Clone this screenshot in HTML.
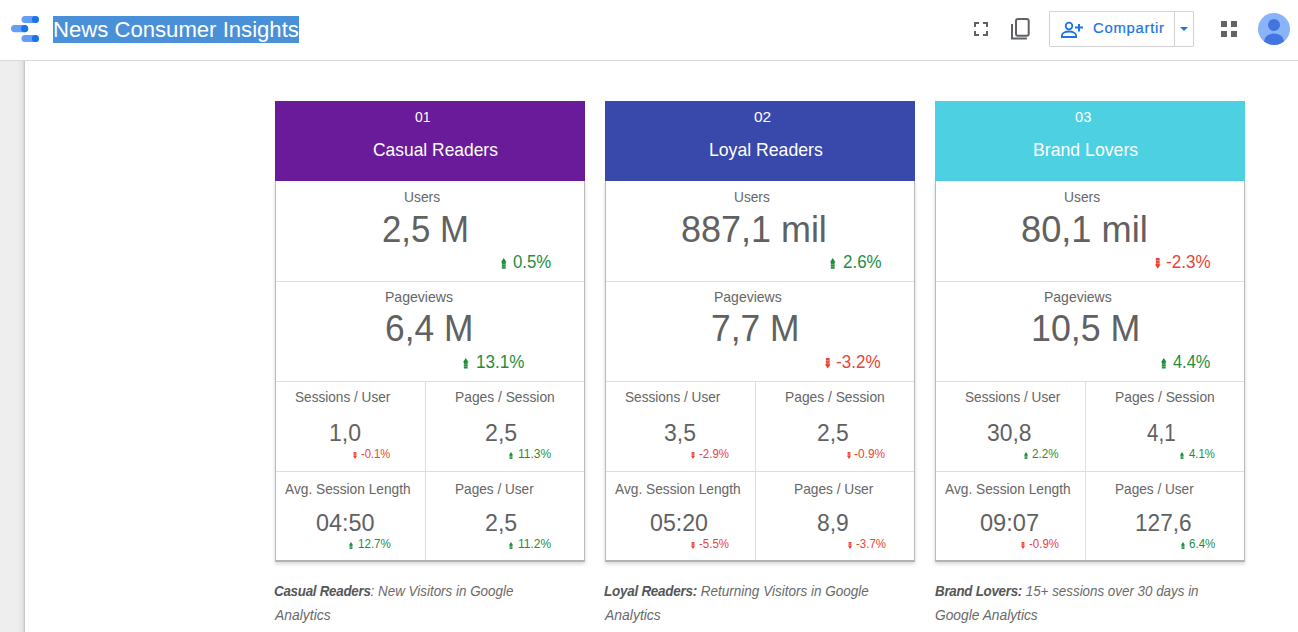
<!DOCTYPE html><html><head><meta charset="utf-8"><style>
*{margin:0;padding:0;box-sizing:border-box}
html,body{width:1298px;height:632px;overflow:hidden;background:#fff;font-family:"Liberation Sans",sans-serif}
.t{position:absolute;white-space:nowrap;transform-origin:0 0}
.ar{position:absolute;overflow:visible}
b{letter-spacing:-0.3px;color:#575757}
#topbar{position:absolute;left:0;top:0;width:1298px;height:60px;background:#fff}
#topline{position:absolute;left:0;top:60px;width:1298px;height:1px;background:#d9d9d9}
#side{position:absolute;left:0;top:61px;width:25px;height:571px;background:linear-gradient(to right,#eeeeee 0,#eeeeee 17px,#e6e6e6 22px,#d9d9d9 23.5px,#c8c8c8 24px,#c8c8c8 25px)}
.hl{position:absolute;left:53px;top:16px;width:246px;height:27px;background:#4a90d9}
.hd{position:absolute;top:101px;width:310px;height:80px}
.bd{position:absolute;top:181px;width:310px;height:381px;background:#fff;border:1px solid #b9b9b9;border-top:none;border-bottom:2px solid #b3b3b3;box-shadow:0 2px 4px rgba(0,0,0,.16)}
.hr{position:absolute;height:1px;background:#dedede}
.vr{position:absolute;width:1px;background:#dedede}
</style></head><body><div id="topbar"></div><div id="topline"></div><div id="side"></div>
<svg style="position:absolute;left:10px;top:15px" width="30" height="28" viewBox="0 0 30 28">
<rect x="11.5" y="1" width="17.4" height="7" rx="3.5" fill="#669df6"/><circle cx="25.4" cy="4.5" r="3.5" fill="#1a73e8"/>
<rect x="1" y="10" width="17.2" height="7.2" rx="3.6" fill="#669df6"/><circle cx="14.6" cy="13.6" r="3.6" fill="#1a73e8"/>
<rect x="11.5" y="20" width="17.4" height="7" rx="3.5" fill="#669df6"/><circle cx="25.4" cy="23.5" r="3.5" fill="#1a73e8"/>
</svg>
<div class="hl"></div>
<svg style="position:absolute;left:974px;top:22px" width="14" height="14" viewBox="0 0 14 14"><path d="M0,0H5V2H2V5H0Z M9,0H14V5H12V2H9Z M0,9H2V12H5V14H0Z M12,9H14V14H9V12H12Z" fill="#5f6368"/></svg>
<svg style="position:absolute;left:1010px;top:17px" width="22" height="24" viewBox="0 0 22 24"><path d="M2,6.9V21.5H16.9" fill="none" stroke="#5f6368" stroke-width="2"/><rect x="6" y="1.9" width="12.7" height="16.8" rx="2" fill="none" stroke="#5f6368" stroke-width="2"/></svg>
<div style="position:absolute;left:1049px;top:11px;width:145px;height:36px;border:1px solid #d2d2d2;border-radius:1px"></div>
<div style="position:absolute;left:1174px;top:12px;width:1px;height:34px;background:#d2d2d2"></div>
<svg style="position:absolute;left:1060px;top:21px" width="24" height="18" viewBox="0 0 24 18"><circle cx="9" cy="5" r="3.3" fill="none" stroke="#1a73e8" stroke-width="1.8"/><path d="M1.9,16V14.5C1.9,12 5.5,10.5 9,10.5S16.1,12 16.1,14.5V16Z" fill="none" stroke="#1a73e8" stroke-width="1.8"/><path d="M15,6.6H23M19,3V10.6" stroke="#1a73e8" stroke-width="2"/></svg>
<svg style="position:absolute;left:1180px;top:27px" width="8" height="4" viewBox="0 0 8 4"><path d="M0,0H8L4,4Z" fill="#1a73e8"/></svg>
<svg style="position:absolute;left:1221px;top:21px" width="16" height="16" viewBox="0 0 16 16"><rect x="0" y="0" width="6" height="6" fill="#5f6368"/><rect x="10" y="0" width="6" height="6" fill="#5f6368"/><rect x="0" y="10" width="6" height="6" fill="#5f6368"/><rect x="10" y="10" width="6" height="6" fill="#5f6368"/></svg>
<svg style="position:absolute;left:1258px;top:13px" width="32" height="32" viewBox="0 0 32 32"><defs><clipPath id="cc"><circle cx="16" cy="16" r="16"/></clipPath></defs><circle cx="16" cy="16" r="16" fill="#8ab4f8"/><g clip-path="url(#cc)"><circle cx="16" cy="12" r="6" fill="#4176e0"/><ellipse cx="16" cy="28.5" rx="10" ry="8" fill="#4176e0"/></g></svg>
<div class="hd" style="left:275px;background:#6a1b9a"></div>
<div class="bd" style="left:275px"></div>
<div class="hr" style="left:276px;top:281px;width:308px"></div>
<div class="hr" style="left:276px;top:381px;width:308px"></div>
<div class="hr" style="left:276px;top:471px;width:308px"></div>
<div class="vr" style="left:425px;top:382px;height:178px"></div>
<div class="hd" style="left:605px;background:#3949ab"></div>
<div class="bd" style="left:605px"></div>
<div class="hr" style="left:606px;top:281px;width:308px"></div>
<div class="hr" style="left:606px;top:381px;width:308px"></div>
<div class="hr" style="left:606px;top:471px;width:308px"></div>
<div class="vr" style="left:755px;top:382px;height:178px"></div>
<div class="hd" style="left:935px;background:#4dd0e1"></div>
<div class="bd" style="left:935px"></div>
<div class="hr" style="left:936px;top:281px;width:308px"></div>
<div class="hr" style="left:936px;top:381px;width:308px"></div>
<div class="hr" style="left:936px;top:471px;width:308px"></div>
<div class="vr" style="left:1085px;top:382px;height:178px"></div>
<div id="title" class="t" style="left:53.16px;top:18.22px;font-size:22.66px;line-height:22.66px;color:#ffffff;font-style:normal;font-weight:normal;transform:scaleX(0.9763);">News Consumer Insights</div>
<div id="share" class="t" style="left:1092.81px;top:21.59px;font-size:13.80px;line-height:13.80px;color:#1a73e8;font-style:normal;font-weight:normal;transform:scaleX(1.0731);-webkit-text-stroke:0.2px #1a73e8;letter-spacing:0.7px;">Compartir</div>
<div id="num0" class="t" style="left:414.94px;top:108.67px;font-size:15.40px;line-height:15.40px;color:#ffffff;font-style:normal;font-weight:normal;transform:scaleX(0.9073);">01</div>
<div id="name0" class="t" style="left:372.67px;top:140.50px;font-size:18.54px;line-height:18.54px;color:#ffffff;font-style:normal;font-weight:normal;transform:scaleX(0.9398);">Casual Readers</div>
<div id="num1" class="t" style="left:754.16px;top:108.65px;font-size:15.40px;line-height:15.40px;color:#ffffff;font-style:normal;font-weight:normal;transform:scaleX(1.0064);">02</div>
<div id="name1" class="t" style="left:708.86px;top:141.43px;font-size:18.54px;line-height:18.54px;color:#ffffff;font-style:normal;font-weight:normal;transform:scaleX(0.9518);">Loyal Readers</div>
<div id="num2" class="t" style="left:1074.98px;top:108.87px;font-size:15.40px;line-height:15.40px;color:#ffffff;font-style:normal;font-weight:normal;transform:scaleX(0.9501);">03</div>
<div id="name2" class="t" style="left:1032.69px;top:141.43px;font-size:18.54px;line-height:18.54px;color:#ffffff;font-style:normal;font-weight:normal;transform:scaleX(0.9544);">Brand Lovers</div>
<div id="ul0" class="t" style="left:404.25px;top:189.72px;font-size:14.80px;line-height:14.80px;color:#666666;font-style:normal;font-weight:normal;transform:scaleX(0.9339);">Users</div>
<div id="uv0" class="t" style="left:381.93px;top:210.61px;font-size:37.08px;line-height:37.08px;color:#616161;font-style:normal;font-weight:normal;transform:scaleX(0.9395);">2,5 M</div>
<div id="uc0" class="t" style="left:512.81px;top:252.72px;font-size:18.54px;line-height:18.54px;color:#1e8e3e;font-style:normal;font-weight:normal;transform:scaleX(0.9066);">0.5%</div>
<div id="pl0" class="t" style="left:384.65px;top:289.67px;font-size:14.80px;line-height:14.80px;color:#666666;font-style:normal;font-weight:normal;transform:scaleX(0.9498);">Pageviews</div>
<div id="pv0" class="t" style="left:385.28px;top:309.51px;font-size:37.08px;line-height:37.08px;color:#616161;font-style:normal;font-weight:normal;transform:scaleX(0.9526);">6,4 M</div>
<div id="pc0" class="t" style="left:476.29px;top:353.22px;font-size:18.54px;line-height:18.54px;color:#1e8e3e;font-style:normal;font-weight:normal;transform:scaleX(0.9216);">13.1%</div>
<div id="ul1" class="t" style="left:734.26px;top:189.71px;font-size:14.80px;line-height:14.80px;color:#666666;font-style:normal;font-weight:normal;transform:scaleX(0.9249);">Users</div>
<div id="uv1" class="t" style="left:681.44px;top:210.61px;font-size:37.08px;line-height:37.08px;color:#616161;font-style:normal;font-weight:normal;transform:scaleX(0.9695);">887,1 mil</div>
<div id="uc1" class="t" style="left:842.94px;top:252.70px;font-size:18.54px;line-height:18.54px;color:#1e8e3e;font-style:normal;font-weight:normal;transform:scaleX(0.9144);">2.6%</div>
<div id="pl1" class="t" style="left:714.26px;top:289.66px;font-size:14.80px;line-height:14.80px;color:#666666;font-style:normal;font-weight:normal;transform:scaleX(0.9455);">Pageviews</div>
<div id="pv1" class="t" style="left:711.09px;top:309.51px;font-size:37.08px;line-height:37.08px;color:#616161;font-style:normal;font-weight:normal;transform:scaleX(0.9545);">7,7 M</div>
<div id="pc1" class="t" style="left:836.42px;top:353.30px;font-size:18.54px;line-height:18.54px;color:#ea4335;font-style:normal;font-weight:normal;transform:scaleX(0.9206);">-3.2%</div>
<div id="ul2" class="t" style="left:1064.07px;top:189.72px;font-size:14.80px;line-height:14.80px;color:#666666;font-style:normal;font-weight:normal;transform:scaleX(0.9339);">Users</div>
<div id="uv2" class="t" style="left:1021.43px;top:210.61px;font-size:37.08px;line-height:37.08px;color:#616161;font-style:normal;font-weight:normal;transform:scaleX(0.9763);">80,1 mil</div>
<div id="uc2" class="t" style="left:1166.42px;top:252.70px;font-size:18.54px;line-height:18.54px;color:#ea4335;font-style:normal;font-weight:normal;transform:scaleX(0.9206);">-2.3%</div>
<div id="pl2" class="t" style="left:1044.26px;top:289.66px;font-size:14.80px;line-height:14.80px;color:#666666;font-style:normal;font-weight:normal;transform:scaleX(0.9455);">Pageviews</div>
<div id="pv2" class="t" style="left:1030.93px;top:309.51px;font-size:37.08px;line-height:37.08px;color:#616161;font-style:normal;font-weight:normal;transform:scaleX(0.9647);">10,5 M</div>
<div id="pc2" class="t" style="left:1173.44px;top:352.54px;font-size:18.54px;line-height:18.54px;color:#1e8e3e;font-style:normal;font-weight:normal;transform:scaleX(0.8847);">4.4%</div>
<div id="l3l0" class="t" style="left:294.70px;top:390.01px;font-size:14.80px;line-height:14.80px;color:#666666;font-style:normal;font-weight:normal;transform:scaleX(0.9199);">Sessions / User</div>
<div id="v3l0" class="t" style="left:329.45px;top:420.68px;font-size:24.72px;line-height:24.72px;color:#616161;font-style:normal;font-weight:normal;transform:scaleX(0.9322);">1,0</div>
<div id="c3l0" class="t" style="left:361.24px;top:448.29px;font-size:12.36px;line-height:12.36px;color:#ea4335;font-style:normal;font-weight:normal;transform:scaleX(0.9094);">-0.1%</div>
<div id="l3r0" class="t" style="left:454.68px;top:390.02px;font-size:14.80px;line-height:14.80px;color:#666666;font-style:normal;font-weight:normal;transform:scaleX(0.9332);">Pages / Session</div>
<div id="v3r0" class="t" style="left:484.85px;top:420.65px;font-size:24.72px;line-height:24.72px;color:#616161;font-style:normal;font-weight:normal;transform:scaleX(0.9369);">2,5</div>
<div id="c3r0" class="t" style="left:517.82px;top:448.17px;font-size:12.36px;line-height:12.36px;color:#1e8e3e;font-style:normal;font-weight:normal;transform:scaleX(0.9742);">11.3%</div>
<div id="l4l0" class="t" style="left:285.00px;top:482.02px;font-size:14.80px;line-height:14.80px;color:#666666;font-style:normal;font-weight:normal;transform:scaleX(0.9280);">Avg. Session Length</div>
<div id="v4l0" class="t" style="left:315.64px;top:510.72px;font-size:24.72px;line-height:24.72px;color:#616161;font-style:normal;font-weight:normal;transform:scaleX(0.9475);">04:50</div>
<div id="c4l0" class="t" style="left:357.55px;top:538.18px;font-size:12.36px;line-height:12.36px;color:#1e8e3e;font-style:normal;font-weight:normal;transform:scaleX(0.9378);">12.7%</div>
<div id="l4r0" class="t" style="left:454.69px;top:482.02px;font-size:14.80px;line-height:14.80px;color:#666666;font-style:normal;font-weight:normal;transform:scaleX(0.9201);">Pages / User</div>
<div id="v4r0" class="t" style="left:484.85px;top:510.75px;font-size:24.72px;line-height:24.72px;color:#616161;font-style:normal;font-weight:normal;transform:scaleX(0.9369);">2,5</div>
<div id="c4r0" class="t" style="left:517.82px;top:538.17px;font-size:12.36px;line-height:12.36px;color:#1e8e3e;font-style:normal;font-weight:normal;transform:scaleX(0.9742);">11.2%</div>
<div id="l3l1" class="t" style="left:624.70px;top:390.01px;font-size:14.80px;line-height:14.80px;color:#666666;font-style:normal;font-weight:normal;transform:scaleX(0.9199);">Sessions / User</div>
<div id="v3l1" class="t" style="left:663.92px;top:420.68px;font-size:24.72px;line-height:24.72px;color:#616161;font-style:normal;font-weight:normal;transform:scaleX(0.9291);">3,5</div>
<div id="c3l1" class="t" style="left:699.32px;top:448.28px;font-size:12.36px;line-height:12.36px;color:#ea4335;font-style:normal;font-weight:normal;transform:scaleX(0.9288);">-2.9%</div>
<div id="l3r1" class="t" style="left:784.68px;top:390.02px;font-size:14.80px;line-height:14.80px;color:#666666;font-style:normal;font-weight:normal;transform:scaleX(0.9332);">Pages / Session</div>
<div id="v3r1" class="t" style="left:817.27px;top:420.67px;font-size:24.72px;line-height:24.72px;color:#616161;font-style:normal;font-weight:normal;transform:scaleX(0.9248);">2,5</div>
<div id="c3r1" class="t" style="left:854.39px;top:448.23px;font-size:12.36px;line-height:12.36px;color:#ea4335;font-style:normal;font-weight:normal;transform:scaleX(0.9622);">-0.9%</div>
<div id="l4l1" class="t" style="left:615.00px;top:482.02px;font-size:14.80px;line-height:14.80px;color:#666666;font-style:normal;font-weight:normal;transform:scaleX(0.9280);">Avg. Session Length</div>
<div id="v4l1" class="t" style="left:650.06px;top:510.72px;font-size:24.72px;line-height:24.72px;color:#616161;font-style:normal;font-weight:normal;transform:scaleX(0.9375);">05:20</div>
<div id="c4l1" class="t" style="left:699.32px;top:538.28px;font-size:12.36px;line-height:12.36px;color:#ea4335;font-style:normal;font-weight:normal;transform:scaleX(0.9288);">-5.5%</div>
<div id="l4r1" class="t" style="left:794.10px;top:482.02px;font-size:14.80px;line-height:14.80px;color:#666666;font-style:normal;font-weight:normal;transform:scaleX(0.9274);">Pages / User</div>
<div id="v4r1" class="t" style="left:817.27px;top:510.77px;font-size:24.72px;line-height:24.72px;color:#616161;font-style:normal;font-weight:normal;transform:scaleX(0.9248);">8,9</div>
<div id="c4r1" class="t" style="left:855.96px;top:538.28px;font-size:12.36px;line-height:12.36px;color:#ea4335;font-style:normal;font-weight:normal;transform:scaleX(0.9288);">-3.7%</div>
<div id="l3l2" class="t" style="left:964.70px;top:390.01px;font-size:14.80px;line-height:14.80px;color:#666666;font-style:normal;font-weight:normal;transform:scaleX(0.9199);">Sessions / User</div>
<div id="v3l2" class="t" style="left:986.69px;top:420.66px;font-size:24.72px;line-height:24.72px;color:#616161;font-style:normal;font-weight:normal;transform:scaleX(0.9270);">30,8</div>
<div id="c3l2" class="t" style="left:1032.02px;top:448.21px;font-size:12.36px;line-height:12.36px;color:#1e8e3e;font-style:normal;font-weight:normal;transform:scaleX(0.9440);">2.2%</div>
<div id="l3r2" class="t" style="left:1114.68px;top:390.02px;font-size:14.80px;line-height:14.80px;color:#666666;font-style:normal;font-weight:normal;transform:scaleX(0.9332);">Pages / Session</div>
<div id="v3r2" class="t" style="left:1147.12px;top:420.54px;font-size:24.72px;line-height:24.72px;color:#616161;font-style:normal;font-weight:normal;transform:scaleX(0.8332);">4,1</div>
<div id="c3r2" class="t" style="left:1189.00px;top:448.23px;font-size:12.36px;line-height:12.36px;color:#1e8e3e;font-style:normal;font-weight:normal;transform:scaleX(0.9146);">4.1%</div>
<div id="l4l2" class="t" style="left:945.00px;top:482.02px;font-size:14.80px;line-height:14.80px;color:#666666;font-style:normal;font-weight:normal;transform:scaleX(0.9280);">Avg. Session Length</div>
<div id="v4l2" class="t" style="left:980.05px;top:510.69px;font-size:24.72px;line-height:24.72px;color:#616161;font-style:normal;font-weight:normal;transform:scaleX(0.9542);">09:07</div>
<div id="c4l2" class="t" style="left:1029.32px;top:538.28px;font-size:12.36px;line-height:12.36px;color:#ea4335;font-style:normal;font-weight:normal;transform:scaleX(0.9288);">-0.9%</div>
<div id="l4r2" class="t" style="left:1114.69px;top:482.02px;font-size:14.80px;line-height:14.80px;color:#666666;font-style:normal;font-weight:normal;transform:scaleX(0.9201);">Pages / User</div>
<div id="v4r2" class="t" style="left:1134.56px;top:510.74px;font-size:24.72px;line-height:24.72px;color:#616161;font-style:normal;font-weight:normal;transform:scaleX(0.9153);">127,6</div>
<div id="c4r2" class="t" style="left:1188.60px;top:538.28px;font-size:12.36px;line-height:12.36px;color:#1e8e3e;font-style:normal;font-weight:normal;transform:scaleX(0.9364);">6.4%</div>
<div id="cap0a" class="t" style="left:274.07px;top:584.22px;font-size:14.42px;line-height:14.42px;color:#6a6a6a;font-style:italic;font-weight:normal;transform:scaleX(0.9299);"><b>Casual Readers</b>: New Visitors in Google</div>
<div id="cap0b" class="t" style="left:275.00px;top:608.36px;font-size:14.42px;line-height:14.42px;color:#6a6a6a;font-style:italic;font-weight:normal;transform:scaleX(0.9649);">Analytics</div>
<div id="cap1a" class="t" style="left:603.81px;top:584.32px;font-size:14.42px;line-height:14.42px;color:#6a6a6a;font-style:italic;font-weight:normal;transform:scaleX(0.9385);"><b>Loyal Readers:</b> Returning Visitors in Google</div>
<div id="cap1b" class="t" style="left:604.76px;top:608.43px;font-size:14.42px;line-height:14.42px;color:#6a6a6a;font-style:italic;font-weight:normal;transform:scaleX(0.9680);">Analytics</div>
<div id="cap2a" class="t" style="left:934.65px;top:584.27px;font-size:14.42px;line-height:14.42px;color:#6a6a6a;font-style:italic;font-weight:normal;transform:scaleX(0.9281);"><b>Brand Lovers:</b> 15+ sessions over 30 days in</div>
<div id="cap2b" class="t" style="left:934.62px;top:608.36px;font-size:14.42px;line-height:14.42px;color:#6a6a6a;font-style:italic;font-weight:normal;transform:scaleX(0.9550);">Google Analytics</div>
<svg class="ar" style="left:500.5px;top:257.7px" width="5.5" height="10.8" viewBox="0 0 5.5 10.80"><path d="M2.75,0 L5.5,4.2 L4.65,4.2 L4.65,10.800000000000011 L0.8500000000000001,10.800000000000011 L0.8500000000000001,4.2 L0,4.2 Z" fill="#1e8e3e"/><rect x="0.8500000000000001" y="5.94" width="3.8" height="0.7" fill="#fff" fill-opacity="0.45"/><rect x="0.8500000000000001" y="8.42" width="3.8" height="0.7" fill="#fff" fill-opacity="0.45"/></svg>
<svg class="ar" style="left:463.3px;top:357.8px" width="5.5" height="10.6" viewBox="0 0 5.5 10.60"><path d="M2.75,0 L5.5,4.2 L4.65,4.2 L4.65,10.599999999999966 L0.8500000000000001,10.599999999999966 L0.8500000000000001,4.2 L0,4.2 Z" fill="#1e8e3e"/><rect x="0.8500000000000001" y="5.83" width="3.8" height="0.7" fill="#fff" fill-opacity="0.45"/><rect x="0.8500000000000001" y="8.27" width="3.8" height="0.7" fill="#fff" fill-opacity="0.45"/></svg>
<svg class="ar" style="left:830.2px;top:257.7px" width="5.5" height="10.8" viewBox="0 0 5.5 10.80"><path d="M2.75,0 L5.5,4.2 L4.65,4.2 L4.65,10.800000000000011 L0.8500000000000001,10.800000000000011 L0.8500000000000001,4.2 L0,4.2 Z" fill="#1e8e3e"/><rect x="0.8500000000000001" y="5.94" width="3.8" height="0.7" fill="#fff" fill-opacity="0.45"/><rect x="0.8500000000000001" y="8.42" width="3.8" height="0.7" fill="#fff" fill-opacity="0.45"/></svg>
<svg class="ar" style="left:824.9px;top:357.8px" width="5.5" height="10.6" viewBox="0 0 5.5 10.60"><path d="M2.75,10.599999999999966 L5.5,6.399999999999966 L4.65,6.399999999999966 L4.65,0 L0.8500000000000001,0 L0.8500000000000001,6.399999999999966 L0,6.399999999999966 Z" fill="#ea4335"/><rect x="0.8500000000000001" y="2.33" width="3.8" height="0.7" fill="#fff" fill-opacity="0.45"/><rect x="0.8500000000000001" y="4.77" width="3.8" height="0.7" fill="#fff" fill-opacity="0.45"/></svg>
<svg class="ar" style="left:1154.9px;top:257.7px" width="5.5" height="10.8" viewBox="0 0 5.5 10.80"><path d="M2.75,10.800000000000011 L5.5,6.600000000000011 L4.65,6.600000000000011 L4.65,0 L0.8500000000000001,0 L0.8500000000000001,6.600000000000011 L0,6.600000000000011 Z" fill="#ea4335"/><rect x="0.8500000000000001" y="2.38" width="3.8" height="0.7" fill="#fff" fill-opacity="0.45"/><rect x="0.8500000000000001" y="4.86" width="3.8" height="0.7" fill="#fff" fill-opacity="0.45"/></svg>
<svg class="ar" style="left:1160.8px;top:357.8px" width="5.5" height="10.6" viewBox="0 0 5.5 10.60"><path d="M2.75,0 L5.5,4.2 L4.65,4.2 L4.65,10.599999999999966 L0.8500000000000001,10.599999999999966 L0.8500000000000001,4.2 L0,4.2 Z" fill="#1e8e3e"/><rect x="0.8500000000000001" y="5.83" width="3.8" height="0.7" fill="#fff" fill-opacity="0.45"/><rect x="0.8500000000000001" y="8.27" width="3.8" height="0.7" fill="#fff" fill-opacity="0.45"/></svg>
<svg class="ar" style="left:352.9px;top:451.5px" width="4.0" height="7.0" viewBox="0 0 4.0 7.00"><path d="M2.0,7.0 L4.0,3.8 L3.4,3.8 L3.4,0 L0.6000000000000001,0 L0.6000000000000001,3.8 L0,3.8 Z" fill="#ea4335"/><rect x="0.6000000000000001" y="1.54" width="2.8" height="0.7" fill="#fff" fill-opacity="0.45"/><rect x="0.6000000000000001" y="3.15" width="2.8" height="0.7" fill="#fff" fill-opacity="0.45"/></svg>
<svg class="ar" style="left:509.0px;top:451.5px" width="4.0" height="7.0" viewBox="0 0 4.0 7.00"><path d="M2.0,0 L4.0,3.2 L3.4,3.2 L3.4,7.0 L0.6000000000000001,7.0 L0.6000000000000001,3.2 L0,3.2 Z" fill="#1e8e3e"/><rect x="0.6000000000000001" y="3.85" width="2.8" height="0.7" fill="#fff" fill-opacity="0.45"/><rect x="0.6000000000000001" y="5.46" width="2.8" height="0.7" fill="#fff" fill-opacity="0.45"/></svg>
<svg class="ar" style="left:348.8px;top:541.5px" width="4.0" height="7.0" viewBox="0 0 4.0 7.00"><path d="M2.0,0 L4.0,3.2 L3.4,3.2 L3.4,7.0 L0.6000000000000001,7.0 L0.6000000000000001,3.2 L0,3.2 Z" fill="#1e8e3e"/><rect x="0.6000000000000001" y="3.85" width="2.8" height="0.7" fill="#fff" fill-opacity="0.45"/><rect x="0.6000000000000001" y="5.46" width="2.8" height="0.7" fill="#fff" fill-opacity="0.45"/></svg>
<svg class="ar" style="left:509.0px;top:541.5px" width="4.0" height="7.0" viewBox="0 0 4.0 7.00"><path d="M2.0,0 L4.0,3.2 L3.4,3.2 L3.4,7.0 L0.6000000000000001,7.0 L0.6000000000000001,3.2 L0,3.2 Z" fill="#1e8e3e"/><rect x="0.6000000000000001" y="3.85" width="2.8" height="0.7" fill="#fff" fill-opacity="0.45"/><rect x="0.6000000000000001" y="5.46" width="2.8" height="0.7" fill="#fff" fill-opacity="0.45"/></svg>
<svg class="ar" style="left:691.2px;top:451.5px" width="4.0" height="7.0" viewBox="0 0 4.0 7.00"><path d="M2.0,7.0 L4.0,3.8 L3.4,3.8 L3.4,0 L0.6000000000000001,0 L0.6000000000000001,3.8 L0,3.8 Z" fill="#ea4335"/><rect x="0.6000000000000001" y="1.54" width="2.8" height="0.7" fill="#fff" fill-opacity="0.45"/><rect x="0.6000000000000001" y="3.15" width="2.8" height="0.7" fill="#fff" fill-opacity="0.45"/></svg>
<svg class="ar" style="left:846.9px;top:451.5px" width="4.0" height="7.0" viewBox="0 0 4.0 7.00"><path d="M2.0,7.0 L4.0,3.8 L3.4,3.8 L3.4,0 L0.6000000000000001,0 L0.6000000000000001,3.8 L0,3.8 Z" fill="#ea4335"/><rect x="0.6000000000000001" y="1.54" width="2.8" height="0.7" fill="#fff" fill-opacity="0.45"/><rect x="0.6000000000000001" y="3.15" width="2.8" height="0.7" fill="#fff" fill-opacity="0.45"/></svg>
<svg class="ar" style="left:691.2px;top:541.5px" width="4.0" height="7.0" viewBox="0 0 4.0 7.00"><path d="M2.0,7.0 L4.0,3.8 L3.4,3.8 L3.4,0 L0.6000000000000001,0 L0.6000000000000001,3.8 L0,3.8 Z" fill="#ea4335"/><rect x="0.6000000000000001" y="1.54" width="2.8" height="0.7" fill="#fff" fill-opacity="0.45"/><rect x="0.6000000000000001" y="3.15" width="2.8" height="0.7" fill="#fff" fill-opacity="0.45"/></svg>
<svg class="ar" style="left:848.0px;top:541.5px" width="4.0" height="7.0" viewBox="0 0 4.0 7.00"><path d="M2.0,7.0 L4.0,3.8 L3.4,3.8 L3.4,0 L0.6000000000000001,0 L0.6000000000000001,3.8 L0,3.8 Z" fill="#ea4335"/><rect x="0.6000000000000001" y="1.54" width="2.8" height="0.7" fill="#fff" fill-opacity="0.45"/><rect x="0.6000000000000001" y="3.15" width="2.8" height="0.7" fill="#fff" fill-opacity="0.45"/></svg>
<svg class="ar" style="left:1024.2px;top:451.5px" width="4.0" height="7.0" viewBox="0 0 4.0 7.00"><path d="M2.0,0 L4.0,3.2 L3.4,3.2 L3.4,7.0 L0.6000000000000001,7.0 L0.6000000000000001,3.2 L0,3.2 Z" fill="#1e8e3e"/><rect x="0.6000000000000001" y="3.85" width="2.8" height="0.7" fill="#fff" fill-opacity="0.45"/><rect x="0.6000000000000001" y="5.46" width="2.8" height="0.7" fill="#fff" fill-opacity="0.45"/></svg>
<svg class="ar" style="left:1180.1px;top:451.5px" width="4.0" height="7.0" viewBox="0 0 4.0 7.00"><path d="M2.0,0 L4.0,3.2 L3.4,3.2 L3.4,7.0 L0.6000000000000001,7.0 L0.6000000000000001,3.2 L0,3.2 Z" fill="#1e8e3e"/><rect x="0.6000000000000001" y="3.85" width="2.8" height="0.7" fill="#fff" fill-opacity="0.45"/><rect x="0.6000000000000001" y="5.46" width="2.8" height="0.7" fill="#fff" fill-opacity="0.45"/></svg>
<svg class="ar" style="left:1021.2px;top:541.5px" width="4.0" height="7.0" viewBox="0 0 4.0 7.00"><path d="M2.0,7.0 L4.0,3.8 L3.4,3.8 L3.4,0 L0.6000000000000001,0 L0.6000000000000001,3.8 L0,3.8 Z" fill="#ea4335"/><rect x="0.6000000000000001" y="1.54" width="2.8" height="0.7" fill="#fff" fill-opacity="0.45"/><rect x="0.6000000000000001" y="3.15" width="2.8" height="0.7" fill="#fff" fill-opacity="0.45"/></svg>
<svg class="ar" style="left:1180.8px;top:541.5px" width="4.0" height="7.0" viewBox="0 0 4.0 7.00"><path d="M2.0,0 L4.0,3.2 L3.4,3.2 L3.4,7.0 L0.6000000000000001,7.0 L0.6000000000000001,3.2 L0,3.2 Z" fill="#1e8e3e"/><rect x="0.6000000000000001" y="3.85" width="2.8" height="0.7" fill="#fff" fill-opacity="0.45"/><rect x="0.6000000000000001" y="5.46" width="2.8" height="0.7" fill="#fff" fill-opacity="0.45"/></svg></body></html>
